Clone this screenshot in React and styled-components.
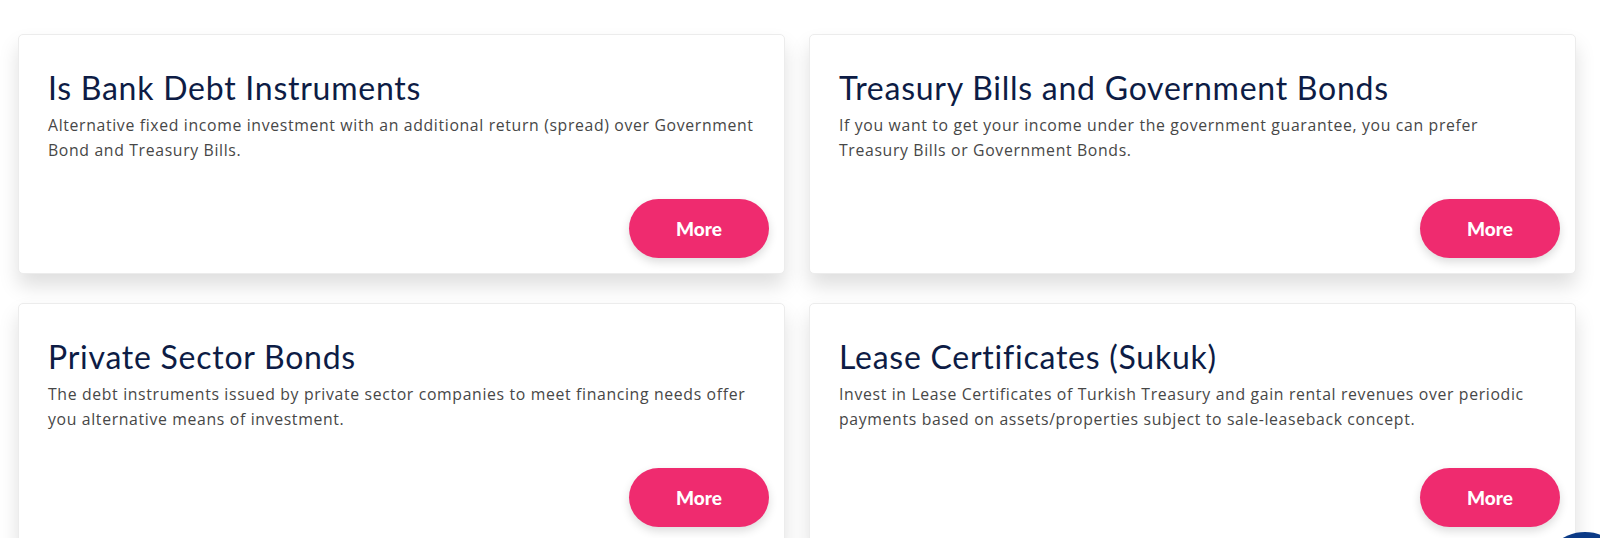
import React from 'react';
import styled, { createGlobalStyle } from 'styled-components';

const GlobalStyle = createGlobalStyle`
  html, body {
    margin: 0;
    padding: 0;
    background: #fff;
    font-family: "Open Sans", Lato, Arial, sans-serif;
    overflow: hidden;
  }
`;

const Page = styled.div`
  width: 1600px;
  height: 538px;
  box-sizing: border-box;
  padding: 34px 24px 0 18px;
`;

const Grid = styled.div`
  display: grid;
  grid-template-columns: 1fr 1fr;
  column-gap: 24px;
  row-gap: 29px;
`;

const Card = styled.div`
  height: 240px;
  display: flex;
  flex-direction: column;
  box-sizing: border-box;
  background: #fff;
  border: 1px solid #ececec;
  border-radius: 5px;
  box-shadow: 0 12px 20px rgba(0, 0, 0, 0.13);
`;

const Content = styled.div`
  padding: 34px 30px 0 29px;
`;

const Title = styled.h3`
  margin: 0 0 6px;
  font-family: Lato, "Open Sans", Arial, sans-serif;
  font-size: 32px;
  font-weight: 400;
  letter-spacing: 0.75px;
  line-height: 38px;
  color: #0d1c45;
`;

const Text = styled.p`
  margin: 0;
  font-family: "Open Sans", Lato, Arial, sans-serif;
  font-size: 15.8px;
  letter-spacing: 0.65px;
  line-height: 25px;
  color: #474747;
`;

const Footer = styled.div`
  margin-top: auto;
  display: flex;
  justify-content: flex-end;
  padding: 0 15px 15px 0;
`;

const MoreButton = styled.button`
  width: 140px;
  height: 59px;
  border: none;
  border-radius: 30px;
  background: #ef2b6f;
  color: #fff;
  font-family: Lato, Arial, sans-serif;
  font-size: 19px;
  font-weight: 900;
  cursor: pointer;
  box-shadow: 0 4px 10px rgba(0, 0, 0, 0.14);
`;

const ChatBubble = styled.div`
  position: fixed;
  left: 1540px;
  top: 532px;
  width: 90px;
  height: 90px;
  border-radius: 45px;
  background: #0b3a86;
`;

const products = [
  {
    title: 'Is Bank Debt Instruments',
    text: 'Alternative fixed income investment with an additional return (spread) over Government Bond and Treasury Bills.',
  },
  {
    title: 'Treasury Bills and Government Bonds',
    text: 'If you want to get your income under the government guarantee, you can prefer Treasury Bills or Government Bonds.',
  },
  {
    title: 'Private Sector Bonds',
    text: 'The debt instruments issued by private sector companies to meet financing needs offer you alternative means of investment.',
  },
  {
    title: 'Lease Certificates (Sukuk)',
    text: 'Invest in Lease Certificates of Turkish Treasury and gain rental revenues over periodic payments based on assets/properties subject to sale-leaseback concept.',
  },
];

export default function App() {
  return (
    <>
      <GlobalStyle />
      <Page>
        <Grid>
          {products.map((p) => (
            <Card key={p.title}>
              <Content>
                <Title>{p.title}</Title>
                <Text>{p.text}</Text>
              </Content>
              <Footer>
                <MoreButton>More</MoreButton>
              </Footer>
            </Card>
          ))}
        </Grid>
      </Page>
      <ChatBubble />
    </>
  );
}
